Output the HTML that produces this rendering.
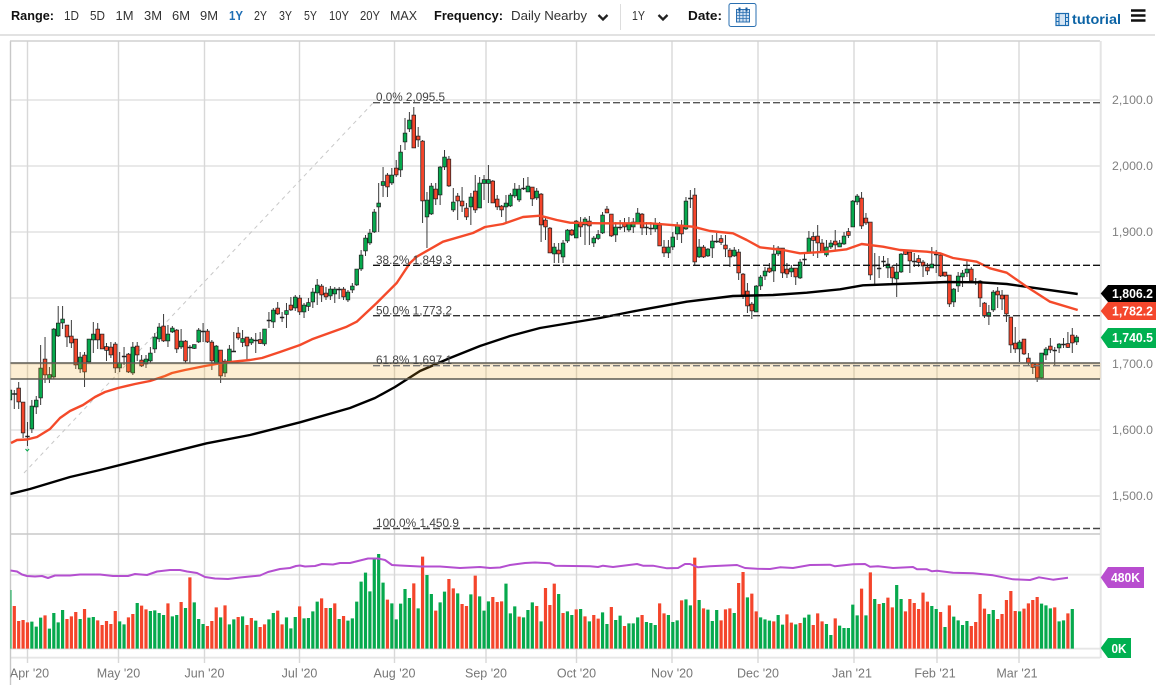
<!DOCTYPE html>
<html><head><meta charset="utf-8"><title>Chart</title>
<style>
html,body{margin:0;padding:0;background:#fff}
svg{display:block;font-family:"Liberation Sans",sans-serif}
.c path{vector-effect:non-scaling-stroke}
.h{font-size:13px;fill:#333}
.b{font-size:13px;font-weight:bold;fill:#111}
.y{font-size:12px;fill:#808080}
.x{font-size:12.5px;fill:#777;text-anchor:middle}
.f{font-size:12px;fill:#444}
.t{font-size:12.5px;font-weight:bold;fill:#fff}
</style></head><body>
<svg width="1158" height="696" viewBox="0 0 1158 696" xmlns="http://www.w3.org/2000/svg">
<defs>
<clipPath id="pl"><rect x="10.5" y="41" width="1090" height="620"/></clipPath>
<path id="g" vector-effect="non-scaling-stroke" d="M-1 392V398M4 408V427M5 402V405M6 370V396M8 376.5v.1M9 331V375M10 325V334M11 321v.1M15 359V367M17 341V360M18 336V338M24 365V366M27 349V371M30 361V362M31 355V359M32 339V347M33 329V337M35 336V339M36 330v.1M38 343V345M41 346.5v.1M42 332V340M46 348V361M48 363V371M49 351V360M52 340.5v.1M54 341v.1M57 331V342M59 312V320M62 312.5v.1M64 299V306M66 307V310M67 304.5v.1M68 294V300M69 287V291M72 291V294M73 291V292M76 294V298M77 288v.1M78 271V283M79 257V267M80 240V249M81 235V241M82 214V230M83 205v.1M84 183.5v.1M86 177V181M88 154V168M89 135V140M90 122V127M94 202V215M95 188V212M97 169V193M98 159V165M100 204V208M104 199V205M106 185V206M107 181.5v.1M108 181.5v.1M112 205v.1M113 197V204M114 191V194M115 191V198M117 188V190M119 193V196M123 249V252M125 245V255M126 232V239M128 223V236M130 221V223M132 240V241M133 236.5v.1M134 217V231M137 229V233M140 226V228M141 224V225M142 215V221M146 226V227M149 249V251M150 239V245M151 227V232M153 203V227M156 249V255M158 251V254M159 243V246M164 252V254M169 288V310M170 279V284M171 273V274M173 256V269M174 250V252M177 270v.1M179 264V276M181 240V251M185 249V253M186 245v.1M188 245v.1M189 238V242M191 203V225M192 198V200M199 266v.1M201 274V277M202 256V270M209 266v.1M214 291V300M215 278V284M216 275v.1M217 271v.1M222 314.5v.1M223 294V308M229 344V347M234 355V376M235 351V353M238 346v.1M242 339V340"/>
<path id="r" vector-effect="non-scaling-stroke" d="M1 390V400M2 404V431M7 361V373M12 327V335M13 338V341M14 341V363M16 357V370M19 331V338M20 336V347M21 348.5v.1M22 349V353M23 346V366M26 356V370M28 348V353M29 362V364M34 328V339M37 332V347M39 343V359M44 333V340M45 344V359M47 352V374M51 335V336M53 339V344M56 341.5v.1M60 310V312M63 307V308M65 300V310M70 288V293M71 295v.1M75 291V295M85 177V185M87 170V173M91 117V146M92 138v.1M93 143V199M96 191V197M99 161V184M101 198V199M102 203V204M103 210V215M105 193V208M109 183V201M110 201V205M111 208v.1M118 189V197M120 196V223M121 222V225M122 230V251M124 252v.1M127 232V233M129 225v.1M131 223V224M135 211v.1M136 216V234M139 225v.1M143 216V226M147 227V244M148 249V251M152 227V232M155 197V260M157 249V255M161 240.5v.1M162 247v.1M163 252V255M165 254V271M166 276V293M167 293V304M168 306V309M172 270v.1M175 250V271M176 271V272M178 270V275M182 238.5v.1M183 238V241M184 245V250M187 243v.1M190 233.5v.1M193 200V224M194 220V221M195 224V273M200 269V276M203 252.5v.1M204 254V259M206 260.5v.1M207 264v.1M208 269v.1M211 257V274M212 274v.1M213 277V302M218 271V279M220 283V296M221 305V314M224 293v.1M225 297v.1M226 297V312M227 319V343M228 345V347M230 341V352M231 360V361M232 365.5v.1M233 365V376M236 348v.1M240 345.5v.1M241 337V341"/>
</defs>

<!-- header -->
<text x="11" y="20" class="b" textLength="43" lengthAdjust="spacingAndGlyphs">Range:</text>
<text x="64" y="20" class="h" textLength="15" lengthAdjust="spacingAndGlyphs">1D</text>
<text x="90" y="20" class="h" textLength="15" lengthAdjust="spacingAndGlyphs">5D</text>
<text x="115.5" y="20" class="h" textLength="18" lengthAdjust="spacingAndGlyphs">1M</text>
<text x="144" y="20" class="h" textLength="18" lengthAdjust="spacingAndGlyphs">3M</text>
<text x="172" y="20" class="h" textLength="18" lengthAdjust="spacingAndGlyphs">6M</text>
<text x="200" y="20" class="h" textLength="18" lengthAdjust="spacingAndGlyphs">9M</text>
<text x="229" y="20" class="b" style="fill:#1f6fb5" textLength="14" lengthAdjust="spacingAndGlyphs">1Y</text>
<text x="254" y="20" class="h" textLength="13" lengthAdjust="spacingAndGlyphs">2Y</text>
<text x="279" y="20" class="h" textLength="13" lengthAdjust="spacingAndGlyphs">3Y</text>
<text x="304" y="20" class="h" textLength="13" lengthAdjust="spacingAndGlyphs">5Y</text>
<text x="329" y="20" class="h" textLength="20" lengthAdjust="spacingAndGlyphs">10Y</text>
<text x="360" y="20" class="h" textLength="20" lengthAdjust="spacingAndGlyphs">20Y</text>
<text x="390" y="20" class="h" textLength="27" lengthAdjust="spacingAndGlyphs">MAX</text>
<text x="434" y="20" class="b" textLength="69" lengthAdjust="spacingAndGlyphs">Frequency:</text>
<text x="511" y="20" class="h" textLength="76" lengthAdjust="spacingAndGlyphs">Daily Nearby</text>
<path d="M598.5 15l4.5 4.5 4.5-4.5" fill="none" stroke="#222" stroke-width="2.3"/>
<line x1="620.5" y1="4" x2="620.5" y2="30" stroke="#ddd"/>
<text x="632" y="20" class="h" textLength="13" lengthAdjust="spacingAndGlyphs">1Y</text>
<path d="M658.5 15l4.5 4.5 4.5-4.5" fill="none" stroke="#222" stroke-width="2.3"/>
<text x="688" y="20" class="b" textLength="34" lengthAdjust="spacingAndGlyphs">Date:</text>
<rect x="729" y="3.5" width="27" height="23" rx="2" fill="#fff" stroke="#2a6fb0" stroke-width="1"/>
<rect x="736.5" y="9.5" width="13" height="12.5" fill="#cfe0f2" stroke="#2a6fb0"/>
<path d="M736.5 12.5h13M736.5 15.5h13M736.5 18.5h13M739.7 9.5v12.5M743 9.5v12.5M746.2 9.5v12.5" stroke="#2a6fb0" stroke-width=".8" fill="none"/>
<rect x="738.5" y="7.5" width="2" height="4" fill="#1d5f9f"/><rect x="745.5" y="7.5" width="2" height="4" fill="#1d5f9f"/>
<rect x="1056" y="13.5" width="12.5" height="12" fill="#d7e6f4" stroke="#1a6bb0" stroke-width="1.2"/>
<path d="M1059 13.5v12M1065.5 13.5v12M1056 17.5h3M1056 21.5h3M1065.5 17.5h3M1065.5 21.5h3" stroke="#1a6bb0" fill="none"/>
<text x="1072" y="24" style="font-size:13.5px;font-weight:bold;fill:#0b63a5" textLength="49" lengthAdjust="spacingAndGlyphs">tutorial</text>
<path d="M1131 10.5h14.5M1131 15.5h14.5M1131 20.5h14.5" stroke="#111" stroke-width="2.6" fill="none"/>
<line x1="0" y1="35" x2="1155" y2="35" stroke="#d0d0d0" stroke-width="1.2"/>

<!-- frame & grid -->
<g fill="none">
<path d="M10 100H1100M10 166H1100M10 232H1100M10 298H1100M10 364H1100M10 430H1100M10 496H1100M10 574.7H1100M10 648.7H1100M10 657.7H1100" stroke="#e6e6e6" stroke-width="1.8"/>
<path d="M27.5 41V663M118.5 41V663M204.5 41V663M299.5 41V663M394.5 41V663M486 41V663M576.5 41V663M672 41V663M758 41V663M854 41V663M937 41V663M1019 41V663" stroke="#d8d8d8" stroke-width="1.4"/>
<path d="M10.5 41V685" stroke="#c8c8c8" stroke-width="1.4"/>
<path d="M10 41H1100" stroke="#d0d0d0" stroke-width="1.4"/>
<path d="M1100.7 41V658" stroke="#e4e4e4" stroke-width="2"/>
<path d="M10 534H1100" stroke="#c8c8c8" stroke-width="1.6"/>
<path d="M24 473L373 103" stroke="#c8c8c8" stroke-dasharray="4 4"/>
</g>

<!-- candles -->
<g clip-path="url(#pl)">
<g class="c" transform="translate(14.3 0) scale(4.39 1)" fill="none">
<path stroke="#3a3a3a" stroke-width="1" d="M-1 388V402M0 390V409M1 382V409M2 402V438M3 422V446M4 400V433M5 396V414M6 345V405M7 337V383M8 367V383M9 328V379M10 306V337M11 306V329M12 325V347M13 320V348M14 339V369M15 352V373M16 352V387M17 339V363M18 322V353M19 323V349M20 334V349M21 343V361M22 342V358M23 342V373M24 352V372M25 347V365M26 353V373M27 342V375M28 342V361M29 355V367M30 355V368M31 347V363M32 333V353M33 323V342M34 314V342M35 325V347M36 326V333M37 329V353M38 329V349M39 340V363M40 345V363M41 345V349M42 328V343M43 323V342M44 329V343M45 340V370M46 345V364M47 350V383M48 359V377M49 345V363M50 332V352M51 327V340M52 330V347M53 337V361M54 337V345M55 333V353M56 332V344M57 329V346M58 312V328M59 308V328M60 302V315M61 312V322M62 303V328M63 297V311M64 295V311M65 295V315M66 303V318M67 298V311M68 288V308M69 279V305M70 284V302M71 287V300M72 286V300M73 287V303M74 287V299M75 287V300M76 290V302M77 283V293M78 269V286M79 250V271M80 235V256M81 229V245M82 209V233M83 183V232M84 167V197M85 173V197M86 168V185M87 160V177M88 145V177M89 118V150M90 112V132M91 107V148M92 127V147M93 140V223M94 192V248M95 183V215M96 183V205M97 166V205M98 150V170M99 156V187M100 188V212M101 193V220M102 187V212M103 203V220M104 193V225M105 175V213M106 177V208M107 175V200M108 165V203M109 180V203M110 195V210M111 205V217M112 195V223M113 193V207M114 183V198M115 185V202M116 178V190M117 177V192M118 187V206M119 188V200M120 193V242M121 216V240M122 227V253M123 243V263M124 243V263M125 240V263M126 229V243M127 229V236M128 220V238M129 217V237M130 217V245M131 216V245M132 236V247M133 230V240M134 212V234M135 206V213M136 214V237M137 222V242M138 220V230M139 218V232M140 217V232M141 218V233M142 208V224M143 213V235M144 222V235M145 222V235M146 218V232M147 222V246M148 240V257M149 240V258M150 232V250M151 222V240M152 220V243M153 197V230M154 190V208M155 188V265M156 239V258M157 245V258M158 248V257M159 235V258M160 233V243M161 235V245M162 235V257M163 248V267M164 247V257M165 249V280M166 273V299M167 283V313M168 302V319M169 285V312M170 275V290M171 267V280M172 263V273M173 245V282M174 246V256M175 248V278M176 263V278M177 265V277M178 268V285M179 259V279M180 254V265M181 231V253M182 232V256M183 225V258M184 239V253M185 240V257M186 240V249M187 230V250M188 240V247M189 232V245M190 228V238M191 200V227M192 194V205M193 192V229M194 213V225M195 222V280M196 253V285M197 256V278M198 256V267M199 258V278M200 265V283M201 263V297M202 253V273M203 250V255M204 252V273M205 253V267M206 255V267M207 260V277M208 263V275M209 247V268M210 250V273M211 253V277M212 272V277M213 275V307M214 288V307M215 272V292M216 270V287M217 260V277M218 267V283M219 278V285M220 280V307M221 302V318M222 305V325M223 290V312M224 287V308M225 290V310M226 295V322M227 317V353M228 327V353M229 340V362M230 339V355M231 353V365M232 362V374M233 363V382M234 353V379M235 347V360M236 338V353M237 347V366M238 343V353M239 338V348M240 332V348M241 328V353M242 335V345"/>
<path stroke="#222" stroke-width="1.6" d="M-.5 394H.5M2.5 436.5H3.5M24.5 356.5H25.5M39.5 347.5H40.5M42.5 331.5H43.5M49.5 351.5H50.5M54.5 340.5H55.5M57.5 320.5H58.5M60.5 317.5H61.5M73.5 289.5H74.5M115.5 188.5H116.5M137.5 227.5H138.5M143.5 227.5H144.5M144.5 228.5H145.5M153.5 198.5H154.5M159.5 241.5H160.5M179.5 259.5H180.5M195.5 265.5H196.5M196.5 268.5H197.5M197.5 261.5H198.5M204.5 261.5H205.5M209.5 254.5H210.5M218.5 282.5H219.5M236.5 350.5H237.5M238.5 344.5H239.5"/>
<use href="#g" stroke="#222" stroke-width="4.4" stroke-linecap="square"/>
<use href="#r" stroke="#222" stroke-width="4.4" stroke-linecap="square"/>
<use href="#g" stroke="#06a94d" stroke-width="2.9" stroke-linecap="square"/>
<use href="#r" stroke="#f4452b" stroke-width="2.9" stroke-linecap="square"/>
</g>

<!-- moving averages -->
<polyline fill="none" stroke="#000" stroke-width="2.4" stroke-linejoin="round" points="10,494 30,489 50,483 70,477 100,470 166.7,453.3 206.7,443.3 250,435 300,422.3 350,408 375,398 395,387 420,371 450,358 480,346 510,336 540,328 570,323 600,318 630,312 650,308.3 686.7,301.7 733,296 773,295 806.7,292.7 840,289.3 863,285.3 896.7,284 946.7,282 980,282.3 1006.7,284 1030,287.3 1077.7,294"/>
<polyline fill="none" stroke="#f44a2a" stroke-width="2.4" stroke-linejoin="round" points="11,443 17,440 27,439.5 37,437 50,429 60,418 70,411 83,405 95,397 105,392 118,388 135,384 150,381 165,376 172,373 185,370 205,366 222,363 240,361 250,360 262,358 280,352 300,345 312,339.3 346.7,326.7 356.7,321.7 376.7,303 396.7,283 410,263 416.7,256.7 443,241.7 473,233 485,227 503,224 523,217 540,215.7 556.7,220 570,222.7 600,223.3 650,223.3 693,226.7 710,231 733,233.3 746.7,240 760,247.3 783,250 800,253.3 826.7,251.7 846.7,249.3 861.7,244 883,246.7 900,250 926.7,251.7 940,253.3 953,258 976.7,261.7 990,268.3 1006.7,272.7 1026.7,286.7 1050,301.7 1077.7,310"/>

<!-- zone -->
<rect x="10.5" y="363" width="1090" height="16" fill="#f7a823" opacity=".2"/>
<path d="M10.5 363H1100M10.5 379H1100" stroke="#5d5a52" stroke-width="1.4" fill="none"/>
</g>
<path d="M25.5 449l1.8 2 1.8-2" stroke="#06a94d" fill="none"/>

<!-- fib -->
<g fill="none" stroke-dasharray="7 3">
<path d="M373 102.7H1100" stroke="#555" stroke-width="1.4"/>
<path d="M373 265.3H1100" stroke="#111" stroke-width="1.4"/>
<path d="M373 315.7H1100" stroke="#333" stroke-width="1.4"/>
<path d="M373 365.7H1100" stroke="#777" stroke-width="1.4"/>
<path d="M373 528.5H1100" stroke="#444" stroke-width="1.4"/>
</g>
<text x="376" y="101" class="f" textLength="69" lengthAdjust="spacingAndGlyphs">0.0% 2,095.5</text>
<text x="376" y="264" class="f" textLength="76" lengthAdjust="spacingAndGlyphs">38.2% 1,849.3</text>
<text x="376" y="314.5" class="f" textLength="76" lengthAdjust="spacingAndGlyphs">50.0% 1,773.2</text>
<text x="376" y="364" class="f" textLength="76" lengthAdjust="spacingAndGlyphs">61.8% 1,697.1</text>
<text x="376" y="527" class="f" textLength="83" lengthAdjust="spacingAndGlyphs">100.0% 1,450.9</text>

<!-- volume -->
<g clip-path="url(#pl)">
<g class="c" transform="translate(14.3 530) scale(4.39 .33333)" fill="none" stroke-width="3.2">
<path stroke="#06a94d" d="M-1 356V180M4 356V275M5 356V290M6 356V263M8 356V296M9 356V249M10 356V277M11 356V240M15 356V267M17 356V263M18 356V261M24 356V274M25 356V283M28 356V219M31 356V243M32 356V241M33 356V249M34 356V255M36 356V259M37 356V255M39 356V234M41 356V217M42 356V267M43 356V282M47 356V262M49 356V283M50 356V268M52 356V259M55 356V272M58 356V268M59 356V249M62 356V262M63 356V295M64 356V261M66 356V265M67 356V264M68 356V244M69 356V215M72 356V234M74 356V267M76 356V272M77 356V265M78 356V215M79 356V155M80 356V128M81 356V184M82 356V88M83 356V72M84 356V158M86 356V220M87 356V268M88 356V221M89 356V177M90 356V204M92 356V235M94 356V135M95 356V192M97 356V217M98 356V185M101 356V190M104 356V193M106 356V199M107 356V242M108 356V214M112 356V161M113 356V250M114 356V229M116 356V262M117 356V240M118 356V217M120 356V274M124 356V192M126 356V244M127 356V255M129 356V237M131 356V274M134 356V247M135 356V282M137 356V270M138 356V257M140 356V280M141 356V280M142 356V262M144 356V276M145 356V279M146 356V285M149 356V255M150 356V276M151 356V271M153 356V208M154 356V226M156 356V210M158 356V239M159 356V273M160 356V240M164 356V249M167 356V202M170 356V262M171 356V268M172 356V272M174 356V255M175 356V284M178 356V283M180 356V263M181 356V254M185 356V282M186 356V315M188 356V287M189 356V294M190 356V294M191 356V224M192 356V256M194 356V256M196 356V207M198 356V219M201 356V165M202 356V207M209 356V228M210 356V237M212 356V291M214 356V260M215 356V271M216 356V285M217 356V273M222 356V252M223 356V240M229 356V244M234 356V221M235 356V226M236 356V235M238 356V274M239 356V271M241 356V237"/>
<path stroke="#f4452b" d="M0 356V228M1 356V273M2 356V270M3 356V277M7 356V256M12 356V267M13 356V259M14 356V246M16 356V237M19 356V271M20 356V285M21 356V273M22 356V282M23 356V243M26 356V262M27 356V252M29 356V227M30 356V238M35 356V220M38 356V216M40 356V142M44 356V288M45 356V273M46 356V232M48 356V226M51 356V261M53 356V285M54 356V264M56 356V291M57 356V283M60 356V242M61 356V283M65 356V229M70 356V205M71 356V234M73 356V220M75 356V258M85 356V209M91 356V160M93 356V80M96 356V242M99 356V147M100 356V175M102 356V222M103 356V228M105 356V137M109 356V201M110 356V216M111 356V214M115 356V260M119 356V228M121 356V174M122 356V225M123 356V161M125 356V249M128 356V238M130 356V259M132 356V255M133 356V266M136 356V231M139 356V288M143 356V255M147 356V220M148 356V250M152 356V211M155 356V83M157 356V235M161 356V271M162 356V238M163 356V235M165 356V159M166 356V126M168 356V191M169 356V244M173 356V274M176 356V253M177 356V278M179 356V279M182 356V285M183 356V250M184 356V274M187 356V265M193 356V176M195 356V127M197 356V222M199 356V203M200 356V232M203 356V244M204 356V207M205 356V219M206 356V237M207 356V188M208 356V215M211 356V246M213 356V226M218 356V288M219 356V276M220 356V192M221 356V236M224 356V267M225 356V252M226 356V210M227 356V183M228 356V243M230 356V236M231 356V220M232 356V210M233 356V201M237 356V232M240 356V250"/>
</g>
<polyline fill="none" stroke="#b44fd0" stroke-width="2" stroke-linejoin="round" points="10.5,570.5 17,571.5 22,574.5 27,576 35,576.5 42,576 48,578 55,575.5 70,575.5 80,574.5 100,574.5 113,576 128,576 135,574 147,575 157,571.5 170,570 180,570 187,571.5 197,573 205,577 215,578.5 228,579 240,577.5 260,575.5 268,572 280,569 290,568 296,566 300,565.5 305,566.5 315,566 322,564 333,564.5 340,563 350,563 358,561 368,558.5 378,558.5 385,560 392,565 400,565.5 420,566.5 440,566.5 460,568 480,567 490,568 500,567.5 510,565 525,563 535,562.5 550,563.3 555,565.7 590,566.3 598,567 603,565.7 613,567 637,564 643,565.7 653,565.7 667,568.3 678,568 685,564 690,564 698,567.3 710,566.3 737,565 745,568 757,568.7 770,569 780,567.3 793,568 810,565 830,564.7 835,566.3 853,564.3 865,564 870,566.7 878,566.3 893,568 913,567 917,569.3 927,569.3 932,571.3 937,570.7 953,572.7 973,573.3 993,575.3 1013,579.3 1030,580 1039,577.3 1053,579.7 1068,577.7"/>
</g>

<!-- y axis -->
<text x="1112" y="104" class="y" textLength="41" lengthAdjust="spacingAndGlyphs">2,100.0</text>
<text x="1112" y="170" class="y" textLength="41" lengthAdjust="spacingAndGlyphs">2,000.0</text>
<text x="1112" y="236" class="y" textLength="41" lengthAdjust="spacingAndGlyphs">1,900.0</text>
<text x="1112" y="368" class="y" textLength="41" lengthAdjust="spacingAndGlyphs">1,700.0</text>
<text x="1112" y="434" class="y" textLength="41" lengthAdjust="spacingAndGlyphs">1,600.0</text>
<text x="1112" y="500" class="y" textLength="41" lengthAdjust="spacingAndGlyphs">1,500.0</text>

<path d="M1100.7 293.5L1108 285H1156V302H1108Z" fill="#000"/>
<text x="1112" y="298" class="t" textLength="41" lengthAdjust="spacingAndGlyphs">1,806.2</text>
<path d="M1100.7 311L1108 302H1156V320H1108Z" fill="#f4472c"/>
<text x="1112" y="315.5" class="t" textLength="41" lengthAdjust="spacingAndGlyphs">1,782.2</text>
<path d="M1100.7 337.5L1108 328H1156V348H1108Z" fill="#00b050"/>
<text x="1112" y="342" class="t" textLength="41" lengthAdjust="spacingAndGlyphs">1,740.5</text>
<path d="M1100.7 577.5L1108 567H1144V588H1108Z" fill="#b84dcf"/>
<text x="1111" y="582" class="t" textLength="29" lengthAdjust="spacingAndGlyphs">480K</text>
<path d="M1100.7 648L1108 638H1131V658H1108Z" fill="#00b050"/>
<text x="1111.5" y="653" class="t" textLength="15" lengthAdjust="spacingAndGlyphs">0K</text>

<!-- x axis -->
<svg x="10.5" y="660" width="60" height="30"><text x="19" y="17.5" class="x">Apr '20</text></svg>
<text x="118.5" y="677.5" class="x">May '20</text>
<text x="204.5" y="677.5" class="x">Jun '20</text>
<text x="299.5" y="677.5" class="x">Jul '20</text>
<text x="394.5" y="677.5" class="x">Aug '20</text>
<text x="486" y="677.5" class="x">Sep '20</text>
<text x="576.5" y="677.5" class="x">Oct '20</text>
<text x="672" y="677.5" class="x">Nov '20</text>
<text x="758" y="677.5" class="x">Dec '20</text>
<text x="852" y="677.5" class="x">Jan '21</text>
<text x="935" y="677.5" class="x">Feb '21</text>
<text x="1017" y="677.5" class="x">Mar '21</text>
</svg>
</body></html>
